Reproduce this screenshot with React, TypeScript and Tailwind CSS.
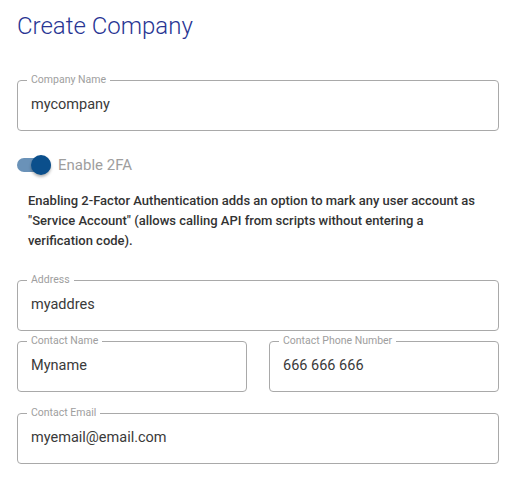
import React from "react"

const font = { fontFamily: "Roboto, 'Liberation Sans', sans-serif" }

function Field({ label, value, className = "" }: { label: string; value: string; className?: string }) {
  return (
    <fieldset className={"min-w-0 border border-[#a9a9a9] rounded-[4px] px-[9px] pb-[15px] " + className}>
      <legend className="px-[4px] text-[10.5px] leading-[12px] text-[#9e9e9e]">{label}</legend>
      <div className="px-[4px] pt-[9px] text-[14.5px] leading-[20px] text-[#3a3a3a]">{value}</div>
    </fieldset>
  )
}

export default function App() {
  return (
    <div className="w-[517px] min-h-[497px] bg-white pl-[17px] pr-[18px] pt-[10px]" style={font}>
      <h1 className="text-[24px] leading-[32px] font-light text-[#283593]">Create Company</h1>

      <Field label="Company Name" value="mycompany" className="mt-[32px]" />

      <div className="mt-[24px] flex items-center h-[20px]">
        <div className="relative w-[34px] h-[20px] flex items-center">
          <div className="w-[34px] h-[14px] rounded-full bg-[#6a92b8]" />
          <div className="absolute right-0 top-0 w-[20px] h-[20px] rounded-full bg-[#0b4f8c] shadow-[0_2px_3px_rgba(0,0,0,0.3)]" />
        </div>
        <span className="ml-[7px] text-[15px] text-[#9e9e9e]">Enable 2FA</span>
      </div>

      <p className="mt-[16px] pl-[11px] pr-[20px] text-[13px] leading-[20px] font-medium text-[#333333]">
        Enabling 2-Factor Authentication adds an option to mark any user account as "Service Account" (allows calling API
        from scripts without entering a verification code).
      </p>

      <Field label="Address" value="myaddres" className="mt-[23px]" />

      <div className="grid grid-cols-2 gap-x-[22px] mt-[4px]">
        <Field label="Contact Name" value="Myname" />
        <Field label="Contact Phone Number" value="666 666 666" />
      </div>

      <Field label="Contact Email" value="myemail@email.com" className="mt-[15px]" />
    </div>
  )
}
